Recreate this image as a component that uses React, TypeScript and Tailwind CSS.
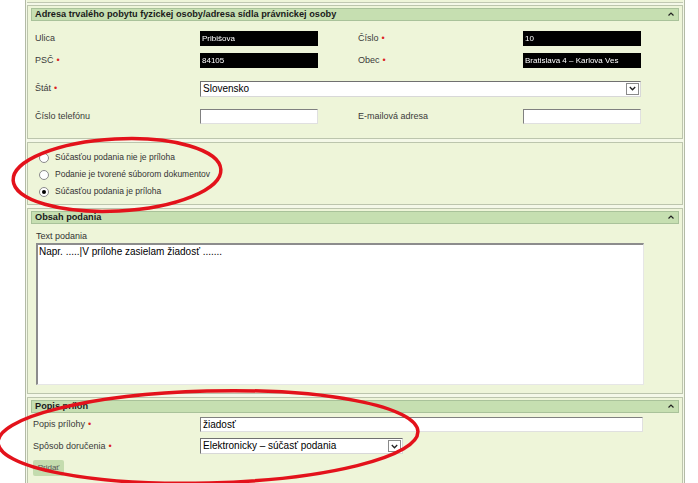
import React from "react";

const Req = () => <span className="text-[#d22] ml-[3px]">•</span>;

function Header({ title }: { title: string }) {
  return (
    <div className="h-[13px] bg-[#c6dfb1] border border-[#a9c29a] flex items-center justify-between pl-[3px] pr-[4px]">
      <span className="font-bold text-[9.2px] leading-none text-[#1a1a1a]">{title}</span>
      <svg width="6" height="4" viewBox="0 0 6 4" className="mt-[-2px]">
        <path d="M0.5 3.5 L3 1 L5.5 3.5" stroke="#222" strokeWidth="1.2" fill="none" />
      </svg>
    </div>
  );
}

function DarkInput({ text }: { text: string }) {
  return (
    <div className="w-[118px] h-[15px] bg-black text-white text-[8px] leading-[15px] pl-[2px] overflow-hidden whitespace-nowrap blur-[0.4px]">
      {text}
    </div>
  );
}

function WhiteInput({ w, text }: { w: string; text?: string }) {
  return (
    <div
      className={`${w} h-[15px] bg-white border-t border-l border-[#808080] border-r border-b border-r-[#e0e0e0] border-b-[#e0e0e0] text-[10px] leading-[13px] pl-[2px] text-black`}
    >
      {text}
    </div>
  );
}

function Select({ w, text }: { w: string; text: string }) {
  return (
    <div
      className={`${w} h-[16px] bg-white border-t border-l border-[#707070] border-r border-b border-r-[#d8d8d8] border-b-[#d8d8d8] flex items-center justify-between pl-[2px] pr-[1px]`}
    >
      <span className="text-[10px] leading-none text-black">{text}</span>
      <div className="w-[13px] h-[12px] border border-[#8a8a8a] bg-white flex items-center justify-center">
        <svg width="7" height="5" viewBox="0 0 7 5">
          <path d="M0.8 1 L3.5 3.8 L6.2 1" stroke="#222" strokeWidth="1.3" fill="none" />
        </svg>
      </div>
    </div>
  );
}

function Label({ children }: { children: React.ReactNode }) {
  return <div className="w-[165px] text-[9px] text-[#3a3a3a] leading-none">{children}</div>;
}

function Radio({ checked, label }: { checked?: boolean; label: string }) {
  return (
    <div className="flex items-center h-[17px]">
      <div className="w-[10px] h-[10px] rounded-full border border-[#8a8a8a] bg-white flex items-center justify-center ml-[11px]">
        {checked && <div className="w-[4px] h-[4px] rounded-full bg-black" />}
      </div>
      <span className="ml-[6px] text-[8.5px] text-[#333] leading-none">{label}</span>
    </div>
  );
}

export default function App() {
  return (
    <div
      className="relative w-[698px] h-[483px] overflow-hidden bg-white"
      style={{ fontFamily: '"Liberation Sans", Arial, sans-serif' }}
    >
      <div className="ml-[25px] w-[660px] h-full border-x border-[#b3bba6] bg-[#f4f8e8]">
        <div className="h-[3px] border-b border-[#c0c8b2] mx-[1px] bg-[#eef5d9]" />
        <div className="px-[1px] pt-[2px] flex flex-col gap-[3px]">
          {/* Panel 1 */}
          <div className="border border-[#bcc5ad] bg-[#eef5d9] px-[3px] pt-[2px] h-[134px]">
            <Header title="Adresa trvalého pobytu fyzickej osoby/adresa sídla právnickej osoby" />
            <div className="pl-[4px] pt-[10px]">
              <div className="flex items-center h-[15px]">
                <Label>Ulica</Label>
                <DarkInput text="Pribišova" />
                <div className="w-[40px]" />
                <Label>
                  Číslo<Req />
                </Label>
                <DarkInput text="10" />
              </div>
              <div className="flex items-center h-[15px] mt-[7px]">
                <Label>
                  PSČ<Req />
                </Label>
                <DarkInput text="84105" />
                <div className="w-[40px]" />
                <Label>
                  Obec<Req />
                </Label>
                <DarkInput text="Bratislava 4 – Karlova Ves" />
              </div>
              <div className="flex items-center h-[17px] mt-[12px]">
                <Label>
                  Štát<Req />
                </Label>
                <Select w="w-[441px]" text="Slovensko" />
              </div>
              <div className="flex items-center h-[15px] mt-[12px]">
                <Label>Číslo telefónu</Label>
                <WhiteInput w="w-[118px]" />
                <div className="w-[40px]" />
                <Label>E-mailová adresa</Label>
                <WhiteInput w="w-[118px]" />
              </div>
            </div>
          </div>

          {/* Panel 2 radios */}
          <div className="border border-[#bcc5ad] bg-[#eef5d9] h-[63px] pt-[6px]">
            <Radio label="Súčasťou podania nie je príloha" />
            <Radio label="Podanie je tvorené súborom dokumentov" />
            <Radio checked label="Súčasťou podania je príloha" />
          </div>

          {/* Panel 3 */}
          <div className="border border-[#bcc5ad] bg-[#eef5d9] px-[3px] pt-[2px] h-[186px]">
            <Header title="Obsah podania" />
            <div className="pl-[5px] pt-[8px] text-[9px] text-[#333] leading-none">Text podania</div>
            <div className="ml-[5px] mt-[2px] w-[608px] h-[142px] bg-white border-t-2 border-l-2 border-[#8c8c8c] border-r border-b border-r-[#e6e6e6] border-b-[#e6e6e6] pl-[1px] pt-[2px] text-[10px] text-black leading-none">
              Napr. .....<span className="font-light">|</span>V prílohe zasielam žiadosť .......
            </div>
          </div>

          {/* Panel 4 */}
          <div className="border border-[#bcc5ad] bg-[#eef5d9] px-[3px] pt-[2px] h-[90px]">
            <Header title="Popis príloh" />
            <div className="pl-[2px]">
              <div className="flex items-center h-[15px] mt-[4px]">
                <div className="w-[167px] text-[9px] text-[#3a3a3a] leading-none">
                  Popis prílohy<Req />
                </div>
                <WhiteInput w="w-[443px]" text="žiadosť" />
              </div>
              <div className="flex items-center h-[16px] mt-[6px]">
                <div className="w-[167px] text-[9px] text-[#3a3a3a] leading-none">
                  Spôsob doručenia<Req />
                </div>
                <Select w="w-[203px]" text="Elektronicky – súčasť podania" />
              </div>
              <div className="mt-[6px] w-[31px] h-[16px] rounded-[2px] bg-[#c4dcae] text-[8px] text-[#555] flex items-center justify-center">
                Pridať
              </div>
            </div>
          </div>
        </div>
      </div>

      <svg className="absolute inset-0 pointer-events-none" width="698" height="483" viewBox="0 0 698 483">
        <ellipse cx="117" cy="175" rx="104" ry="36" transform="rotate(-3 117 175)" fill="none" stroke="#e3121b" strokeWidth="3.5" />
        <ellipse cx="208" cy="437" rx="210" ry="46" transform="rotate(-1.5 208 437)" fill="none" stroke="#e3121b" strokeWidth="3.5" />
      </svg>
    </div>
  );
}
